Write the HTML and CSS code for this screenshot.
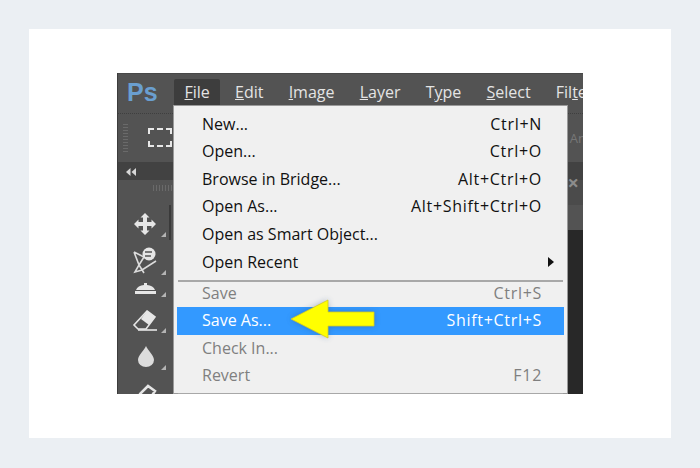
FILE: index.html
```html
<!DOCTYPE html>
<html lang="en">
<head>
    <meta charset="UTF-8">
    <title>Photoshop Save As</title>
    <link rel="stylesheet" href="styles.css">
</head>
<body>

<div class="card">
    <div class="shot">

        <!-- Menu bar -->
        <div class="menubar">
            <span class="logo">Ps</span>
            <span class="top-item active"><u>F</u>ile</span>
            <span class="top-item"><u>E</u>dit</span>
            <span class="top-item"><u>I</u>mage</span>
            <span class="top-item"><u>L</u>ayer</span>
            <span class="top-item">T<u>y</u>pe</span>
            <span class="top-item"><u>S</u>elect</span>
            <span class="top-item">Fil<u>t</u>er</span>
        </div>

        <!-- Options bar -->
        <div class="options">
            <div class="grip"></div>
            <div class="marquee"></div>
            <span class="options-text">An</span>
        </div>

        <!-- Panel header -->
        <div class="panel-head">
            <svg class="collapse" width="10" height="8" viewBox="0 0 10 8">
                <path d="M4.500 0v8L0 4zM10 0v8L5.500 4z" fill="#d8d8d8"/>
            </svg>
        </div>

        <!-- Tools and document area -->
        <div class="work">
            <div class="tools">
                <div class="tools-grip"></div>
                <div class="tools-scroll"></div>
                <div class="tool tool-move">
                    <svg width="32" height="32" viewBox="0 0 32 32">
                        <path d="M16 5l4.500 4.500H18V14h4.500v-2.500L27 16l-4.500 4.500V18H18v4.500h2.500L16 27l-4.500-4.500H14V18H9.500v2.500L5 16l4.500-4.500V14H14V9.500h-2.500z" fill="#e6e6e6"/>
                    </svg>
                </div>
                <div class="tool tool-heal">
                    <svg width="32" height="32" viewBox="0 0 32 32">
                        <path d="M5 6l10 5-5 8 5 8M5 6l5 13-4 7 7-2 14-9" fill="none" stroke="#dcdcdc" stroke-width="1.6"/>
                        <circle cx="20" cy="8" r="6.500" fill="#e6e6e6"/>
                        <path d="M16 6h7M16 10h6" stroke="#555" stroke-width="1.500"/>
                    </svg>
                </div>
                <div class="tool tool-stamp">
                    <svg width="32" height="22" viewBox="0 0 32 22">
                        <path d="M15 3h3v2c4 .5 7 2 8 5H7c1-3 4-4.500 8-5zM6 11h21v3H6z" fill="#e6e6e6"/>
                    </svg>
                </div>
                <div class="tool tool-eraser">
                    <svg width="32" height="32" viewBox="0 0 32 32">
                        <path d="M18 5l8 6-9 12H9l-4-4z" fill="none" stroke="#e6e6e6" stroke-width="1.600"/>
                        <path d="M18 5l8 6-6 8-8-6z" fill="#e6e6e6"/>
                        <path d="M9 24H28" stroke="#e6e6e6" stroke-width="1.600"/>
                    </svg>
                </div>
                <div class="tool tool-drop">
                    <svg width="32" height="32" viewBox="0 0 32 32">
                        <path d="M17 2c2 5 8 9 8 14a8 7 0 0 1-16 0c0-5 6-9 8-14z" fill="#dcdcdc"/>
                    </svg>
                </div>
                <div class="tool tool-last">
                    <svg width="32" height="20" viewBox="0 0 32 20">
                        <path d="M11 12l8-8 7 5-6 9h-9z" fill="none" stroke="#e6e6e6" stroke-width="2.500"/>
                    </svg>
                </div>
            </div>
            <div class="right-side">
                <div class="tab-row"></div>
                <div class="document"></div>
            </div>
        </div>

        <span class="close">&#215;</span>

        <!-- File menu, open over everything -->
        <div class="file-menu">
            <div class="row"><span>New...</span><span class="keys">Ctrl+N</span></div>
            <div class="row"><span>Open...</span><span class="keys">Ctrl+O</span></div>
            <div class="row"><span>Browse in Bridge...</span><span class="keys">Alt+Ctrl+O</span></div>
            <div class="row"><span>Open As...</span><span class="keys">Alt+Shift+Ctrl+O</span></div>
            <div class="row"><span>Open as Smart Object...</span></div>
            <div class="row recent"><span>Open Recent</span><i class="sub-arrow"></i></div>
            <div class="sep"></div>
            <div class="row off"><span>Save</span><span class="keys">Ctrl+S</span></div>
            <div class="row picked"><span>Save As...</span><span class="keys">Shift+Ctrl+S</span></div>
            <div class="row off"><span>Check In...</span></div>
            <div class="row off"><span>Revert</span><span class="keys">F12</span></div>
            <div class="sep sep-end"></div>
        </div>

        <!-- Yellow callout arrow -->
        <svg class="callout" width="110" height="60" viewBox="0 0 110 60">
            <defs>
                <filter id="glow" x="-20%" y="-30%" width="140%" height="160%">
                    <feGaussianBlur stdDeviation="3"/>
                </filter>
            </defs>
            <path d="M14 30L51 11V23H97V37H51V49z" fill="#27467a" opacity=".4" filter="url(#glow)"/>
            <path d="M14 30L51 11V23H97V37H51V49z" fill="#ffff00" stroke="#d6cc1e" stroke-width=".8"/>
        </svg>

    </div>
</div>

</body>
</html>
```

FILE: styles.css
```css
html, body {
    margin: 0;
    height: 100%;
}
body {
    background-color: #ebeff3;
    padding: 29px;
    box-sizing: border-box;
    font-family: "Open Sans", "Noto Sans", sans-serif;
    overflow: hidden;
}
.card {
    background-color: #fff;
    height: 409px;
    padding: 44px 88px;
    box-sizing: border-box;
}
.shot {
    position: relative;
    width: 466px;
    height: 321px;
    overflow: hidden;
    background-color: #535353;
    border-left: 1px solid #3c3c3c;
    box-sizing: border-box;
    display: flex;
    flex-direction: column;
}

/* Menu bar */
.menubar {
    height: 40px;
    flex: none;
    display: flex;
    align-items: flex-start;
    padding: 5px 0 0 9px;
    color: #e4e4e4;
    font-size: 16px;
    white-space: nowrap;
    border-top: 1px solid #484848;
    box-sizing: border-box;
}
.logo {
    width: 47px;
    flex: none;
    color: #6a9fd0;
    font-family: "Liberation Sans", sans-serif;
    font-size: 25px;
    line-height: 26px;
    font-weight: bold;
}
.top-item {
    flex: none;
    padding: 0 10.500px;
    margin-right: 4.200px;
    line-height: 27px;
}
.top-item.active {
    background-color: #3d3d3d;
    border-radius: 2px 2px 0 0;
}

/* Options bar */
.options {
    height: 49px;
    flex: none;
    display: flex;
    align-items: center;
    justify-content: space-between;
    border-top: 1px dotted #3f3f3f;
    box-sizing: border-box;
    padding-left: 5px;
    position: relative;
}
.grip {
    width: 5px;
    height: 28px;
    background: repeating-linear-gradient(#6a6a6a 0 1px, transparent 1px 3px);
}
.marquee {
    position: absolute;
    left: 30px;
    top: 14px;
    width: 20px;
    height: 15px;
    border: 2px dashed #e8e8e8;
}
.options-text {
    color: #777;
    font-size: 13px;
    margin-right: -3px;
}
.panel-head {
    height: 18px;
    flex: none;
    background-color: #424242;
    padding: 6px 0 0 8px;
    box-sizing: border-box;
}
.collapse {
    display: block;
}
.close {
    position: absolute;
    right: 4px;
    top: 100px;
    color: #8c8c8c;
    font-size: 20px;
    line-height: 20px;
    font-weight: bold;
}

/* Tools */
.work {
    flex: 1;
    display: flex;
}
.tools {
    width: 55px;
    flex: none;
    display: flex;
    flex-direction: column;
    align-items: center;
    padding: 28px 2px 0 0;
    box-sizing: border-box;
    position: relative;
}
.tools-grip {
    position: absolute;
    top: 5px;
    right: 1px;
    width: 19px;
    height: 6px;
    background: repeating-linear-gradient(90deg, #6a6a6a 0 1px, transparent 1px 3px);
}
.tools-scroll {
    position: absolute;
    top: 25px;
    right: 2px;
    width: 2px;
    height: 35px;
    background-color: #3a3a3a;
}
.tool {
    flex: none;
    position: relative;
    margin-bottom: 6px;
}
.tool svg {
    display: block;
}
.tool::after {
    content: "";
    position: absolute;
    right: -5px;
    bottom: 3px;
    border-left: 5px solid transparent;
    border-bottom: 5px solid #b4b4b4;
}
.tool-heal {
    margin-bottom: 2px;
}
.tool-stamp {
    margin-bottom: 4px;
}
.tool-eraser::after, .tool-stamp::after {
    bottom: 5px;
}
.tool-drop::after {
    bottom: 6px;
}
.tool-last::after {
    display: none;
}
.right-side {
    flex: 1;
    display: flex;
    flex-direction: column;
}
.tab-row {
    height: 50px;
    flex: none;
    background: linear-gradient(#4b4b4b 0 25px, #535353 25px);
}
.document {
    flex: 1;
    background-color: #282828;
}

/* File menu */
.file-menu {
    position: absolute;
    left: 55px;
    top: 32px;
    width: 395px;
    background-color: #f0f0f0;
    border: 1px solid #9a9a9a;
    box-sizing: border-box;
    padding: 5px 3px 0;
    color: #111;
    font-size: 16px;
}
.row {
    height: 27.400px;
    line-height: 27px;
    display: flex;
    justify-content: space-between;
    padding: 0 22px 0 25px;
    white-space: nowrap;
    position: relative;
}
.keys {
    letter-spacing: .7px;
}
.recent {
    margin-top: 1.500px;
}
.sep {
    height: 2px;
    margin: 3px 1px -2px;
    background-color: #a8a8a8;
}
.sep-end {
    margin-top: 4px;
}
.off {
    color: #7f7f7f;
}
.picked {
    background-color: #3399ff;
    color: #fff;
}
.sub-arrow {
    position: absolute;
    right: 10px;
    top: 8px;
    border-left: 6px solid #111;
    border-top: 5px solid transparent;
    border-bottom: 5px solid transparent;
}
.callout {
    position: absolute;
    left: 159px;
    top: 216px;
}
```
